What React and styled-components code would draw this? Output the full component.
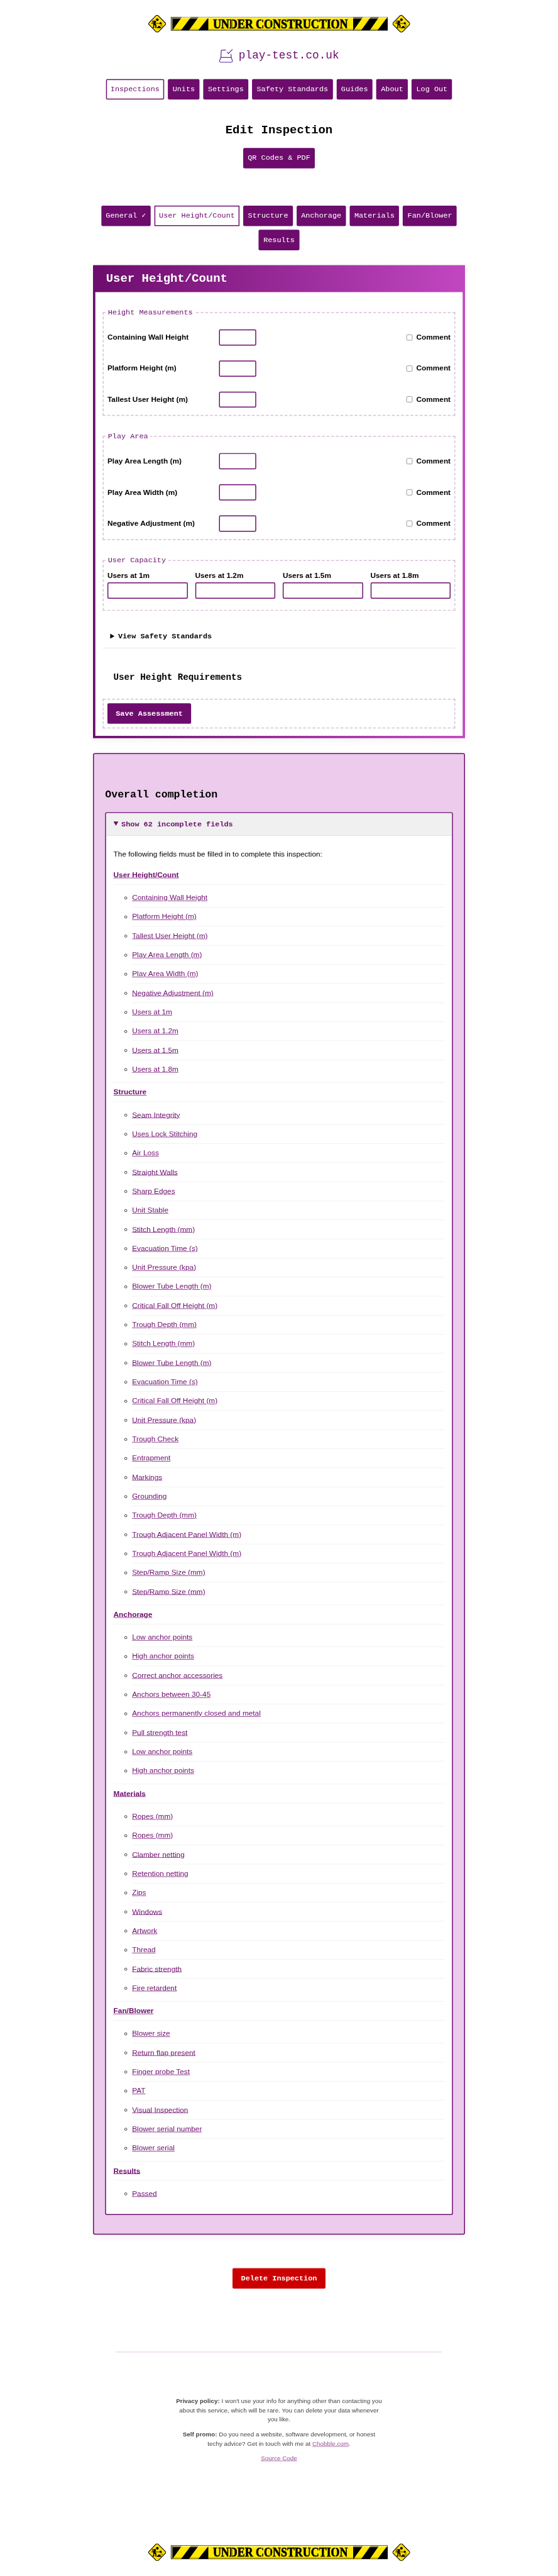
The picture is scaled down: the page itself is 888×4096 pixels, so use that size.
import React from "react";
import styled, { createGlobalStyle } from "styled-components";

const PURPLE = "#6d0c6d";
const MONO = `"Liberation Mono", "DejaVu Sans Mono", monospace`;
const SANS = `"Liberation Sans", Arial, sans-serif`;

const GlobalStyle = createGlobalStyle`
  *, *::before, *::after { box-sizing: border-box; }
  html, body { margin: 0; background: #fff; }
  body { font-family: ${SANS}; font-size: 16px; line-height: 24px; color: #000; }
`;

const Viewport = styled.div`
  width: 888px;
  height: 4096px;
  overflow: hidden;
`;

const Page = styled.div`
  width: 1200px;
  height: 5538px;
  padding-top: 32px;
  display: flex;
  flex-direction: column;
  align-items: center;
  transform: scale(0.74, 0.73962);
  transform-origin: 0 0;
`;

const BannerRow = styled.div`
  display: flex;
  align-items: center;
  gap: 10px;
  height: 38px;
  svg { display: block; }
`;

const Brand = styled.a`
  display: flex;
  align-items: center;
  gap: 12.6px;
  height: 30px;
  margin-top: 35px;
  font: 24px/30px ${MONO};
  color: ${PURPLE};
`;

const ButtonBar = styled.nav`
  display: flex;
  flex-wrap: wrap;
  justify-content: center;
  gap: 8px;
  width: 800px;
  margin-top: ${(p) => p.$top}px;
`;

const NavLink = styled.a`
  height: 44px;
  padding: 8px;
  border: 2px solid ${PURPLE};
  border-radius: ${(p) => (p.$square ? 0 : 3)}px;
  background: ${(p) => (p.$active ? "#fff" : PURPLE)};
  color: ${(p) => (p.$active ? PURPLE : "#fff")};
  font: 16px/24px ${MONO};
  white-space: pre;
`;

const PageTitle = styled.h1`
  margin: 50px 0 0;
  font: bold 25.6px/32px ${MONO};
`;

const Button = styled.button`
  display: block;
  height: 44px;
  margin: ${(p) => p.$top || 0}px 0 0;
  padding: 8px 16px;
  border: 2px solid ${(p) => (p.$danger ? "#cc0000" : PURPLE)};
  border-radius: 3px;
  background: ${(p) => (p.$danger ? "#cc0000" : PURPLE)};
  color: #fff;
  font: bold 16px/24px ${MONO};
`;

const FormPanel = styled.section`
  width: 800px;
  height: 1017px;
  margin-top: 32px;
  padding: 0 5px 5px;
  display: flex;
  flex-direction: column;
  background: linear-gradient(90deg, ${PURPLE}, #c147c1);
  box-shadow: 0 4px 16px rgba(0, 0, 0, 0.06);
`;

const PanelTitle = styled.h2`
  margin: 0;
  padding: 14px 23px 12px;
  font: bold 25.6px/32px ${MONO};
  color: #fff;
`;

const PanelBody = styled.div`
  flex: 1;
  padding: 32px 16px 16px;
  display: flex;
  flex-direction: column;
  background: #fff;
`;

const Fieldset = styled.fieldset`
  margin: 0 0 32px;
  padding: 8px 8px ${(p) => p.$bottom || 0}px;
  border: 2px dashed #d8bfd8;
`;

const Legend = styled.legend`
  margin-left: -4px;
  padding: 0 5px;
  font: 16px/24px ${MONO};
  color: ${PURPLE};
`;

const FieldRow = styled.div`
  display: grid;
  grid-template-columns: 240px 80px 1fr;
  align-items: center;
  height: 66.8px;
  font-weight: bold;
`;

const TextInput = styled.input`
  display: block;
  width: 100%;
  height: 34.8px;
  margin: 0;
  border: 2px solid ${PURPLE};
  border-radius: 3px;
  background: #fff;
`;

const CommentToggle = styled.label`
  justify-self: end;
  display: flex;
  align-items: center;
  gap: 5px;
`;

const Checkbox = styled.input`
  appearance: none;
  width: 13px;
  height: 13px;
  margin: 3px 3px 3px 4px;
  border: 1px solid #767676;
  border-radius: 2.5px;
  background: #fff;
`;

const CapacityGrid = styled.div`
  display: grid;
  grid-template-columns: repeat(4, 1fr);
  gap: 16px;
`;

const CapacityField = styled.label`
  display: flex;
  flex-direction: column;
  gap: 3px;
  font-weight: bold;
`;

const Summary = styled.summary`
  padding: 12px 16px;
  border-bottom: 1px solid #ddd;
  background: ${(p) => (p.$filled ? "#f0f0f0" : "transparent")};
  color: ${(p) => (p.$filled ? PURPLE : "#000")};
  font: bold 16px/24px ${MONO};
`;

const Subheading = styled.h3`
  margin: 50px 0 34px;
  padding-left: 23px;
  font: bold 19.2px/24px ${MONO};
`;

const Actions = styled.div`
  padding: 8px;
  border: 2px dashed #d8bfd8;
`;

const CompletionPanel = styled.section`
  width: 800px;
  height: 3185px;
  margin-top: 32px;
  padding: 74px 24px 40px;
  border: 2px solid ${PURPLE};
  border-radius: 4px;
  background: #eccbec;
  box-shadow: 0 4px 16px rgba(0, 0, 0, 0.06);
`;

const CompletionTitle = styled.h2`
  margin: 0 0 23px;
  font: bold 22.4px/28px ${MONO};
`;

const IncompleteDetails = styled.details`
  border: 2px solid ${PURPLE};
  border-radius: 4px;
  background: #fff;
  overflow: hidden;
`;

const IncompleteBody = styled.div`
  padding: 16px;
`;

const Intro = styled.p`
  margin: 12px 0;
`;

const GroupList = styled.ul`
  margin: 0;
  padding: 0;
  list-style: none;
`;

const Group = styled.li`
  border-bottom: 1px solid #eee;
  &:last-child { border-bottom: 0; }
`;

const GroupTitle = styled.div`
  padding: 8px 0;
  border-bottom: 1px solid #eee;
  font-weight: bold;
`;

const FieldList = styled.ul`
  margin: 0;
  padding: 8px 0 8px 40px;
  list-style: circle;
`;

const FieldItem = styled.li`
  padding: 8px 0;
  border-bottom: 1px solid #eee;
  &:last-child { border-bottom: 0; }
`;

const TextLink = styled.a`
  color: ${PURPLE};
  text-decoration: underline;
`;

const Footer = styled.footer`
  width: 700px;
  height: 412px;
  margin-top: 136px;
  padding-top: 95px;
  display: flex;
  flex-direction: column;
  align-items: center;
  border-top: 1px solid #d5b3d8;
`;

const FooterText = styled.p`
  width: 446px;
  margin: 0 0 11.5px;
  text-align: center;
  font-size: 13.33px;
  line-height: 20px;
  color: #444;
  a { color: #984f98; }
`;

function Worker() {
  return (
    <svg width="38" height="38" viewBox="9 12 114 114">
      <path d="M72 17 119 64Q124 70 119 75L74 121Q66 126 59 121L13 75Q8 70 13 64L58 17Q66 11 72 17Z" fill="#ffde00" stroke="#000" strokeWidth="4.5" />
      <circle cx="67" cy="43" r="8.5" />
      <path d="M58 51H35V65" fill="none" stroke="#000" strokeWidth="3.5" />
      <path d="M43 51H57L59 57 54 67 61 77V96H54V80L47 77V96H37V91L41 88 40 65Z" />
      <path d="M27 67H40M54 61 60 67H82" fill="none" stroke="#000" strokeWidth="3.5" />
      <path d="M82 62 85 59H91L97 67 91 73H85L82 69Z" />
      <path d="M63 98V95L76 83H82L92 94V98Z" />
      <path d="M88 78h4v4h-4zM94 73h4v4h-4zM92 85h4v4h-4zM98 80h3v4h-3z" />
    </svg>
  );
}

function ConstructionBanner() {
  return (
    <BannerRow>
      <Worker />
      <svg width="467" height="30" viewBox="0 0 467 30">
        <rect width="467" height="30" fill="#000" />
        <rect x="81" y="1" width="311.5" height="28" fill="#ffe900" />
        <path d="M4 29H22.5L43.5 1H24ZM39.5 29H59.5L81 2V1H60ZM393.5 29H410L430 1H413.5ZM428.5 29H445L466 1H448Z" fill="#ffe900" />
        <rect x="1" y="1" width="3" height="28" fill="#a09860" />
        <rect x="4" y="1" width="462" height="3" fill="#fff0a0" opacity="0.62" />
        <rect x="4" y="26" width="462" height="3" fill="#000" opacity="0.24" />
        <text x="91" y="24.4" textLength="290" lengthAdjust="spacingAndGlyphs" fontFamily='"Liberation Serif", serif' fontWeight="bold" fontSize="28" stroke="#000" strokeWidth="0.9">
          UNDER CONSTRUCTION
        </text>
        <path d="M131.5 5V25M196 5V9.500M196 20V25M214 5V25M304 5V9.500M304 20V25M354 5V25" stroke="#ffe900" strokeWidth="1.3" />
      </svg>
      <Worker />
    </BannerRow>
  );
}

function CastleLogo() {
  return (
    <svg width="30" height="30" viewBox="15 15 90 90" fill="none" stroke="#5f2d9c" strokeWidth="5">
      <path d="M60 23H37Q29 23 29 32L27 71H94L92 48" />
      <path d="M27 71 19 90Q17 101 28 102H92Q103 101 101 90L94 71" />
      <path d="M66 35 76 45 102 18" />
    </svg>
  );
}

const mainNav = ["Inspections", "Units", "Settings", "Safety Standards", "Guides", "About", "Log Out"];
const tabs = ["General ✓", "User Height/Count", "Structure", "Anchorage", "Materials", "Fan/Blower", "Results"];
const capacities = ["Users at 1m", "Users at 1.2m", "Users at 1.5m", "Users at 1.8m"];

const measurementSets = [
  { legend: "Height Measurements", fields: ["Containing Wall Height", "Platform Height (m)", "Tallest User Height (m)"] },
  { legend: "Play Area", fields: ["Play Area Length (m)", "Play Area Width (m)", "Negative Adjustment (m)"] },
];

const incomplete = [
  {
    title: "User Height/Count",
    fields: [...measurementSets[0].fields, ...measurementSets[1].fields, ...capacities],
  },
  {
    title: "Structure",
    fields: [
      "Seam Integrity", "Uses Lock Stitching", "Air Loss", "Straight Walls", "Sharp Edges", "Unit Stable",
      "Stitch Length (mm)", "Evacuation Time (s)", "Unit Pressure (kpa)", "Blower Tube Length (m)",
      "Critical Fall Off Height (m)", "Trough Depth (mm)", "Stitch Length (mm)", "Blower Tube Length (m)",
      "Evacuation Time (s)", "Critical Fall Off Height (m)", "Unit Pressure (kpa)", "Trough Check", "Entrapment",
      "Markings", "Grounding", "Trough Depth (mm)", "Trough Adjacent Panel Width (m)",
      "Trough Adjacent Panel Width (m)", "Step/Ramp Size (mm)", "Step/Ramp Size (mm)",
    ],
  },
  {
    title: "Anchorage",
    fields: [
      "Low anchor points", "High anchor points", "Correct anchor accessories", "Anchors between 30-45",
      "Anchors permanently closed and metal", "Pull strength test", "Low anchor points", "High anchor points",
    ],
  },
  {
    title: "Materials",
    fields: [
      "Ropes (mm)", "Ropes (mm)", "Clamber netting", "Retention netting", "Zips", "Windows", "Artwork", "Thread",
      "Fabric strength", "Fire retardent",
    ],
  },
  {
    title: "Fan/Blower",
    fields: [
      "Blower size", "Return flap present", "Finger probe Test", "PAT", "Visual Inspection", "Blower serial number",
      "Blower serial",
    ],
  },
  { title: "Results", fields: ["Passed"] },
];

export default function App() {
  return (
    <Viewport>
      <GlobalStyle />
      <Page>
        <ConstructionBanner />
        <Brand>
          <CastleLogo />
          play-test.co.uk
        </Brand>
        <ButtonBar $top={35}>
          {mainNav.map((item, i) => (
            <NavLink key={item} $active={i === 0}>{item}</NavLink>
          ))}
        </ButtonBar>
        <PageTitle>Edit Inspection</PageTitle>
        <ButtonBar $top={22}>
          <NavLink>QR Codes &amp; PDF</NavLink>
        </ButtonBar>
        <ButtonBar $top={80}>
          {tabs.map((item, i) => (
            <NavLink key={item} $active={i === 1} $square={i === 1}>{item}</NavLink>
          ))}
        </ButtonBar>

        <FormPanel>
          <PanelTitle>User Height/Count</PanelTitle>
          <PanelBody>
            {measurementSets.map((set) => (
              <Fieldset key={set.legend}>
                <Legend>{set.legend}</Legend>
                {set.fields.map((field) => (
                  <FieldRow key={field}>
                    <span>{field}</span>
                    <TextInput aria-label={field} />
                    <CommentToggle>
                      <Checkbox type="checkbox" />
                      Comment
                    </CommentToggle>
                  </FieldRow>
                ))}
              </Fieldset>
            ))}
            <Fieldset $bottom={24}>
              <Legend>User Capacity</Legend>
              <CapacityGrid>
                {capacities.map((label) => (
                  <CapacityField key={label}>
                    {label}
                    <TextInput />
                  </CapacityField>
                ))}
              </CapacityGrid>
            </Fieldset>
            <details>
              <Summary>View Safety Standards</Summary>
            </details>
            <Subheading>User Height Requirements</Subheading>
            <Actions>
              <Button>Save Assessment</Button>
            </Actions>
          </PanelBody>
        </FormPanel>

        <CompletionPanel>
          <CompletionTitle>Overall completion</CompletionTitle>
          <IncompleteDetails open>
            <Summary $filled>Show 62 incomplete fields</Summary>
            <IncompleteBody>
              <Intro>The following fields must be filled in to complete this inspection:</Intro>
              <GroupList>
                {incomplete.map((group) => (
                  <Group key={group.title}>
                    <GroupTitle>
                      <TextLink>{group.title}</TextLink>
                    </GroupTitle>
                    <FieldList>
                      {group.fields.map((field, i) => (
                        <FieldItem key={i}>
                          <TextLink>{field}</TextLink>
                        </FieldItem>
                      ))}
                    </FieldList>
                  </Group>
                ))}
              </GroupList>
            </IncompleteBody>
          </IncompleteDetails>
        </CompletionPanel>

        <Button $danger $top={72}>Delete Inspection</Button>

        <Footer>
          <FooterText>
            <strong>Privacy policy:</strong> I won't use your info for anything other than contacting you about this
            service, which will be rare. You can delete your data whenever you like.
          </FooterText>
          <FooterText>
            <strong>Self promo:</strong> Do you need a website, software development, or honest techy advice? Get in
            touch with me at <TextLink>Chobble.com</TextLink>.
          </FooterText>
          <FooterText>
            <TextLink>Source Code</TextLink>
          </FooterText>
        </Footer>
        <ConstructionBanner />
      </Page>
    </Viewport>
  );
}
